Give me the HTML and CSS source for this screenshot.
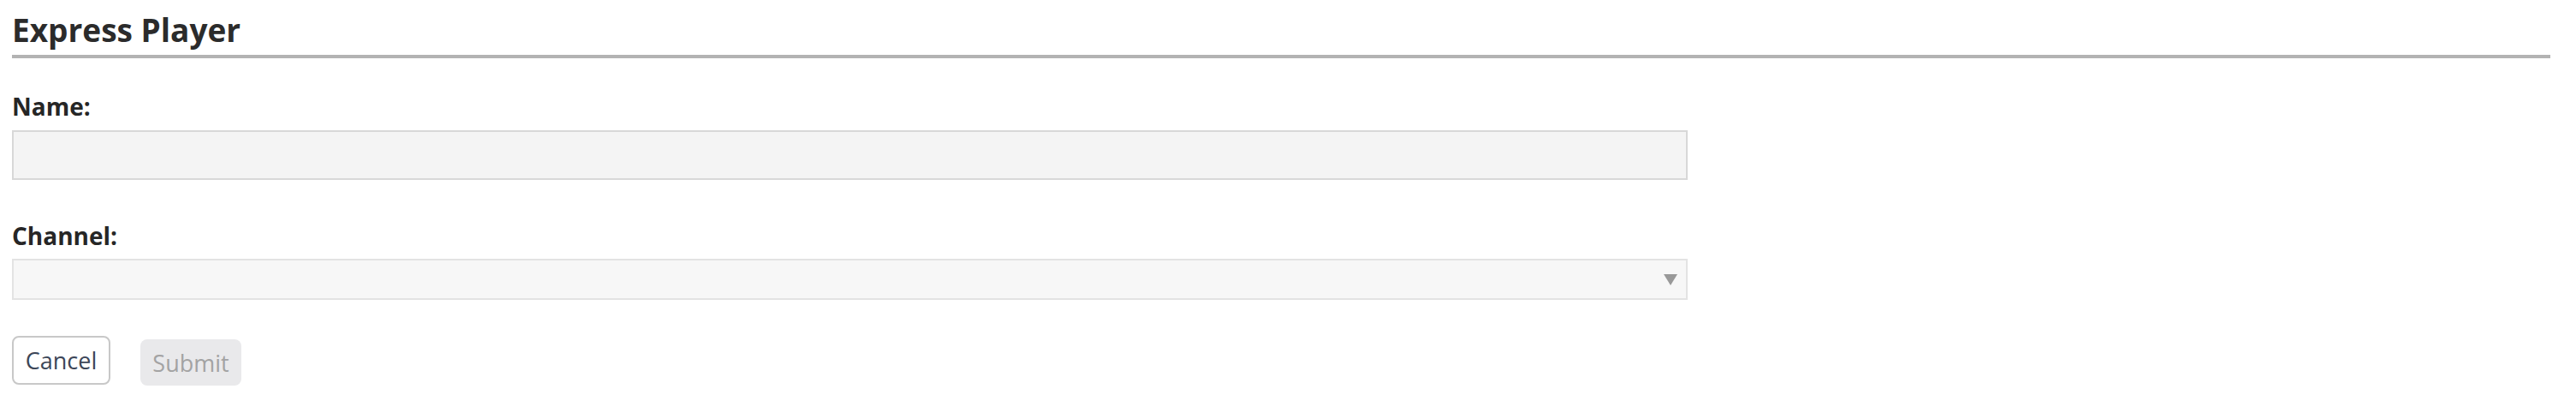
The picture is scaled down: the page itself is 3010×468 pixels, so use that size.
FILE: index.html
```html
<!DOCTYPE html>
<html lang="en">
<head>
    <meta charset="UTF-8">
    <title>Express Player</title>
    <link rel="stylesheet" href="styles.css">
</head>
<body>
    <div class="page">
        <h2 class="title">Express Player</h2>
        <form class="player-form">
            <label class="field-label" for="name">Name:</label>
            <input class="field-input" id="name" type="text" disabled>

            <label class="field-label channel-label" for="channel">Channel:</label>
            <div class="select-wrap">
                <select class="field-select" id="channel" disabled></select>
            </div>

            <div class="actions">
                <button type="button" class="btn btn-cancel">Cancel</button>
                <button type="submit" class="btn btn-submit" disabled>Submit</button>
            </div>
        </form>
    </div>
</body>
</html>
```

FILE: styles.css
```css
body {
    margin: 0;
    font-family: "Open Sans", Lato, sans-serif;
    color: #2b2b2b;
    background: #fff;
}
.page {
    padding: 13px 30px 0 14px;
}
.title {
    margin: 0;
    font-size: 37px;
    line-height: 44px;
    font-weight: 700;
    padding-bottom: 7px;
    border-bottom: 4px solid #b3b3b3;
}
.player-form {
    display: flex;
    flex-direction: column;
    align-items: flex-start;
    max-width: 1958px;
}
.field-label {
    font-size: 28px;
    line-height: 34px;
    font-weight: 700;
    color: #262626;
    margin-top: 39px;
    margin-bottom: 11px;
}
.channel-label {
    margin-top: 48px;
    margin-bottom: 10px;
}
.field-input,
.field-select {
    box-sizing: border-box;
    width: 100%;
    background: #f4f4f4;
    border: 2px solid #d8d8d8;
    margin: 0;
    font-family: inherit;
}
.field-input {
    height: 58px;
}
.select-wrap {
    position: relative;
    width: 100%;
}
.field-select {
    height: 48px;
    appearance: none;
    -webkit-appearance: none;
    display: block;
}
.select-wrap::after {
    content: '';
    position: absolute;
    right: 12px;
    top: 18px;
    border-left: 8px solid transparent;
    border-right: 8px solid transparent;
    border-top: 13px solid #999;
}
.actions {
    display: flex;
    align-items: flex-start;
    gap: 35px;
    margin-top: 42px;
}
.btn {
    font-family: inherit;
    font-size: 27px;
    border-radius: 8px;
    box-sizing: border-box;
    padding: 0;
}
.btn-cancel {
    width: 115px;
    height: 57px;
    background: #fff;
    border: 2px solid #c8c8c8;
    color: #3c4658;
}
.btn-submit {
    width: 118px;
    height: 54px;
    margin-top: 4px;
    background: #e9e9eb;
    border: none;
    color: #a3a3a3;
}
```
